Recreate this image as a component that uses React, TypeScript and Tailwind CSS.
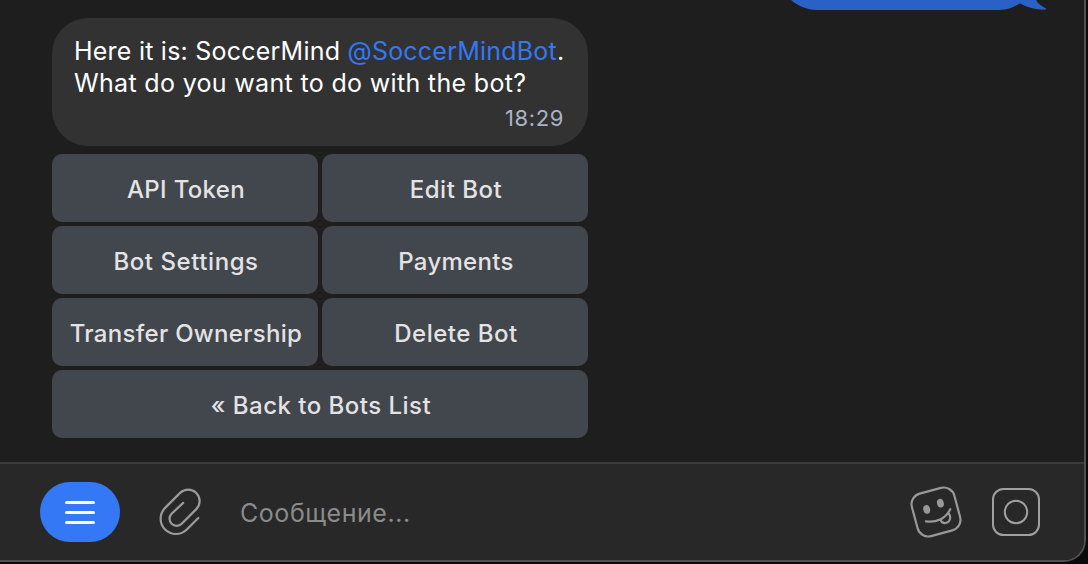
import React from "react";

function OutgoingBubble() {
  return (
    <svg className="ml-[780px] block shrink-0" width="270" height="10" viewBox="0 0 270 10" fill="#2961c6">
      <path d="M11 0C18 6 27 9.900 37 9.900H219C228 9.900 235 6.500 240 3.200C247 7.500 257 10 266 9.600V8.400C261 6 257.500 3 256 0Z" />
    </svg>
  );
}

function ReplyButton({ label, spacing, wide = false }: { label: string; spacing: string; wide?: boolean }) {
  return (
    <button
      className={`flex h-[68px] items-center justify-center rounded-[10px] bg-[#42464d] pt-[3px] pl-[2px] text-[24px] leading-none font-medium whitespace-nowrap text-[#e3e3e4] ${spacing} ${wide ? "col-span-2" : ""}`}
    >
      {label}
    </button>
  );
}

function PaperclipIcon() {
  return (
    <svg className="block" width="44" height="50" viewBox="158 487 44 50" fill="none" stroke="#9b9b9b" strokeWidth="2.2" strokeLinecap="round">
      <path d="M198.300 518L186.800 529.500A15.300 15.300 0 0 1 165.100 507.900L180.100 492.900A11.450 11.450 0 0 1 196.300 509.100L181.700 523.700A7.100 7.100 0 0 1 171.600 513.700L183.200 502.900" />
    </svg>
  );
}

function StickerIcon() {
  return (
    <svg className="block" width="52" height="52" viewBox="910 486 52 52" fill="none" stroke="#989898" strokeWidth="2.2" strokeLinecap="round">
      <rect x="914" y="490" width="44" height="44" rx="11" transform="rotate(-15 936 512)" />
      <g fill="#989898" stroke="none">
        <ellipse cx="926.7" cy="509.4" rx="3.4" ry="4.4" transform="rotate(-15 926.7 509.4)" />
        <ellipse cx="940.4" cy="503.2" rx="3.4" ry="4.4" transform="rotate(-15 940.4 503.2)" />
      </g>
      <path d="M926 521.300C936 522.800 945.500 519 950.300 509.200M940.300 519.600C941.500 522.500 944 523.700 946.600 522.800C950.300 521.500 951.400 517 948.500 512.800" />
    </svg>
  );
}

function CameraIcon() {
  return (
    <svg className="block" width="48" height="48" viewBox="0 0 48 48" fill="none" stroke="#a0a0a0" strokeWidth="2">
      <rect x="1" y="1" width="46" height="46" rx="10.500" />
      <circle cx="24" cy="24" r="11.2" />
    </svg>
  );
}

export default function App() {
  return (
    <div className="h-[564px] w-[1088px] overflow-hidden bg-[#080a0b] font-['Inter','Liberation_Sans',sans-serif]">
      <div className="flex h-[562px] w-[1086px] flex-col overflow-hidden rounded-br-[22px] border-r-2 border-b-2 border-[#505050] bg-[#1e1e1e]">
        <OutgoingBubble />
        <main className="mt-2 ml-[52px] w-[536px]">
          <section className="h-32 rounded-[36px] bg-[#323232] pt-[17px] pl-[22px] text-[25px] leading-8 whitespace-nowrap text-white">
            <p>
              <span className="tracking-[0.23px]">Here it is: SoccerMind </span>
              <span className="tracking-[0.22px] text-[#3478f6]">@SoccerMindBot</span>.
            </p>
            <p className="tracking-[0.33px]">What do you want to do with the bot?</p>
            <p className="pt-[3px] pr-[24px] text-right text-[22px] leading-8 tracking-[0.6px] text-[#a8b4c6]">18:29</p>
          </section>
          <div className="mt-2 grid grid-cols-2 gap-1">
            <ReplyButton label="API Token" spacing="tracking-[0.32px]" />
            <ReplyButton label="Edit Bot" spacing="tracking-[0.5px]" />
            <ReplyButton label="Bot Settings" spacing="tracking-[0.57px]" />
            <ReplyButton label="Payments" spacing="tracking-[0.3px]" />
            <ReplyButton label="Transfer Ownership" spacing="tracking-[0.3px]" />
            <ReplyButton label="Delete Bot" spacing="tracking-[0.5px]" />
            <ReplyButton label="« Back to Bots List" spacing="tracking-[0.48px]" wide />
          </div>
        </main>
        <footer className="mt-auto flex h-[98px] shrink-0 items-center border-t-2 border-[#3b3b3b] bg-[#282828] pl-10">
          <button className="flex h-[60px] w-20 flex-col items-center justify-center gap-[7px] rounded-[30px] bg-[#3478f6]">
            <span className="h-[3px] w-[30px] rounded-full bg-white" />
            <span className="h-[3px] w-[30px] rounded-full bg-white" />
            <span className="h-[3px] w-[30px] rounded-full bg-white" />
          </button>
          <button className="ml-[38px]"><PaperclipIcon /></button>
          <span className="ml-[38px] flex-1 pt-[2px] text-[25px] leading-8 tracking-[0.56px] text-[#8b8b8b]">Сообщение...</span>
          <button className="mr-[30px]"><StickerIcon /></button>
          <button className="mr-[44px]"><CameraIcon /></button>
        </footer>
      </div>
    </div>
  );
}
